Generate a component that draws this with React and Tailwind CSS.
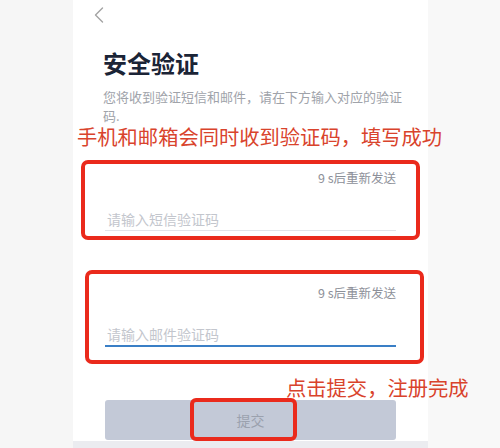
import React from "react";

const font = { fontFamily: '"Noto Sans CJK SC", "Noto Sans", sans-serif' };

export default function App() {
  return (
    <div className="relative flex h-[448px] w-[500px] overflow-hidden bg-[#f6f6f6]" style={font}>
      <div className="w-[73px] shrink-0 bg-[#f6f6f6]" />
      <div className="flex w-[355px] shrink-0 flex-col bg-white">
        <div className="h-[47px] pl-[21px] pt-[7px]">
          <svg width="10" height="16" viewBox="0 0 10 16" fill="none">
            <path d="M8.5 1 L1.5 8 L8.5 15" stroke="#a3a3a3" strokeWidth="1.4" strokeLinecap="round" strokeLinejoin="round" />
          </svg>
        </div>
        <div className="pl-[30px] pr-[24px]">
          <h1 className="text-[24px] font-bold leading-[32px] text-[#1b2436]">安全验证</h1>
          <p className="mt-[8px] text-[13px] leading-[19px] text-[#a0a3aa]">
            您将收到验证短信和邮件，请在下方输入对应的验证码.
          </p>
        </div>

        <div className="mx-[8px] mt-[35px] rounded-[7px] border-[4px] border-[#ea2a1c] pl-[20px] pr-[20px] pt-[6px] pb-[5px]">
          <div className="h-[16px] text-right text-[12.5px] leading-[16px] text-[#8d9099]">9 s后重新发送</div>
          <div className="mt-[22px] h-[23px] border-b border-[#e1e3e8] pl-[2px] text-[14px] leading-[22px] text-[#c3c6cd]">
            请输入短信验证码
          </div>
        </div>

        <div className="ml-[12px] mr-[4px] mt-[30px] rounded-[7px] border-[4px] border-[#ea2a1c] pl-[16px] pr-[24px] pt-[11px] pb-[13px]">
          <div className="h-[16px] text-right text-[12.5px] leading-[16px] text-[#8d9099]">9 s后重新发送</div>
          <div className="mt-[22px] h-[24px] border-b-2 border-[#3a7fc6] pl-[2px] text-[14px] leading-[22px] text-[#c3c6cd]">
            请输入邮件验证码
          </div>
        </div>

        <div className="relative mx-[32px] mt-[36px] flex h-[40px] items-center justify-center rounded-[3px] bg-[#c3c9d7] text-[14px] text-[#9ba1ae]">
          提交
          <div className="absolute left-[85px] top-[-2px] h-[43px] w-[107px] rounded-[6px] border-[4px] border-[#ea2a1c]" />
        </div>
        <div className="mt-[1px] h-[7px] bg-[#ebecf0]" />
      </div>
      <div className="flex-1 bg-[#f8f8f8]" />

      <div className="absolute left-[77px] top-[126px] text-[20.3px] leading-[20px] text-[#d9432c]">
        手机和邮箱会同时收到验证码，填写成功
      </div>
      <div className="absolute left-[286px] top-[377px] text-[20.3px] leading-[20px] text-[#d9432c]">
        点击提交，注册完成
      </div>
    </div>
  );
}
